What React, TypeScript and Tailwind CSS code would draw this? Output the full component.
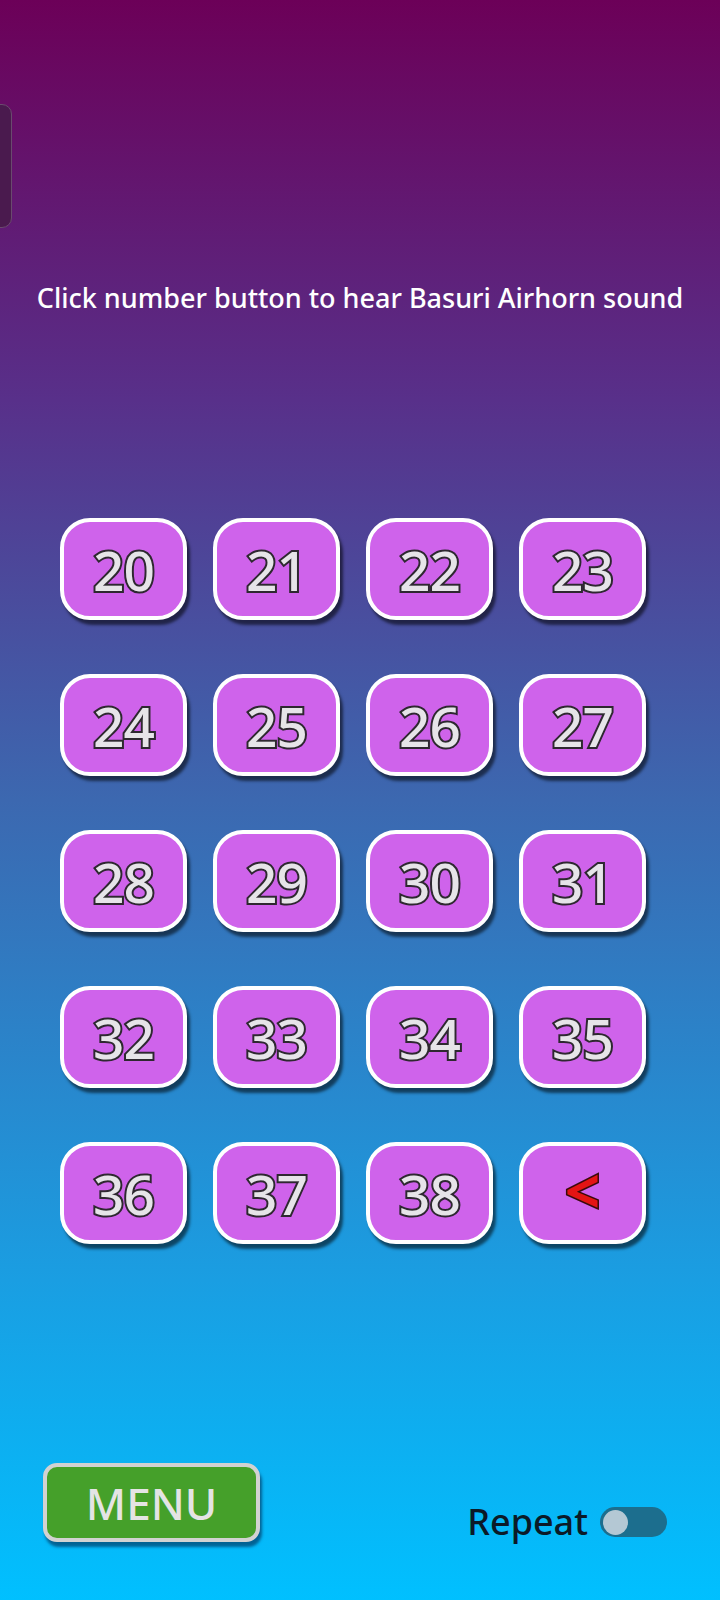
import { useState } from 'react'

const NUMBERS = ['20', '21', '22', '23', '24', '25', '26', '27', '28', '29', '30', '31', '32', '33', '34', '35', '36', '37', '38']

function NumberButton({ label, back }: { label: string; back?: boolean }) {
  return (
    <button
      className="w-[127px] h-[102px] rounded-[30px] border-[4px] border-white bg-[#cf63eb] flex items-center justify-center shadow-[3px_5px_3px_rgba(0,0,0,0.55)]"
    >
      {back ? (
        <span className="text-[62px] leading-none font-bold text-[#e41414] [-webkit-text-stroke:3px_#3a0a0a] [paint-order:stroke_fill] -mt-[6px]">
          &lt;
        </span>
      ) : (
        <span className="text-[55px] leading-none font-medium text-[#e6e4e8] [-webkit-text-stroke:4px_#2e2830] [paint-order:stroke_fill] tracking-[-1px]">
          {label}
        </span>
      )}
    </button>
  )
}

export default function App() {
  const [repeat, setRepeat] = useState(false)

  return (
    <div
      className="relative w-[720px] h-[1600px] overflow-hidden flex flex-col bg-[linear-gradient(180deg,#6c0058_0%,#58308a_25%,#3c68b0_50%,#1a9ee2_80%,#00c0ff_100%)]"
      style={{ fontFamily: '"Noto Sans", "Open Sans", sans-serif' }}
    >
      {/* side tab */}
      <div className="absolute left-[-14px] top-[104px] w-[26px] h-[124px] rounded-[10px] bg-[#4a1a4e] border border-[#6a4a6e]" />

      <p className="mt-[280px] text-center text-white text-[27px] font-medium leading-[36px]">
        Click number button to hear Basuri Airhorn sound
      </p>

      {/* number grid */}
      <div className="mt-[202px] ml-[60px] grid grid-cols-[repeat(4,127px)] gap-x-[26px] gap-y-[54px]">
        {NUMBERS.map((n) => (
          <NumberButton key={n} label={n} />
        ))}
        <NumberButton label="<" back />
      </div>

      {/* bottom bar */}
      <div className="mt-auto mb-[58px] px-[43px] flex items-end justify-between">
        <button className="w-[217px] h-[79px] rounded-[14px] border-[4px] border-[#d2d2d2] bg-[#45a02a] flex items-center justify-center shadow-[2px_5px_3px_rgba(0,40,80,0.6)]">
          <span className="text-[44px] leading-none font-medium text-[#e4e4e4]">MENU</span>
        </button>
        <div className="flex items-center gap-[12px] mr-[10px] mb-[2px]">
          <span className="text-[36px] leading-none font-medium text-[#0b1a28]">Repeat</span>
          <button
            onClick={() => setRepeat(!repeat)}
            className="w-[67px] h-[30px] rounded-full bg-[#1c6e8e] flex items-center px-[3px]"
          >
            <span className="w-[25px] h-[25px] rounded-full bg-[#b4c8d4]" />
          </button>
        </div>
      </div>
    </div>
  )
}
